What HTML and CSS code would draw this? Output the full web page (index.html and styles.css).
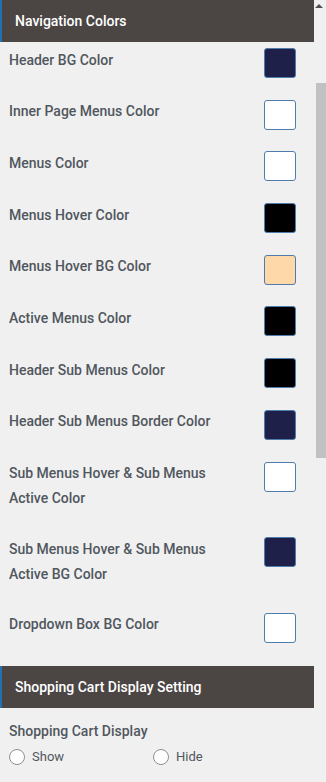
FILE: index.html
```html
<!DOCTYPE html>
<html lang="en">
<head>
  <meta charset="UTF-8">
  <title>Navigation Colors</title>
  <link rel="stylesheet" href="styles.css">
</head>
<body>

  <div class="layout">
    <div class="panel">
      <h3 class="section-title">Navigation Colors</h3>

      <div class="row">
        <span class="label">Header BG Color</span>
        <span class="swatch navy"></span>
      </div>
      <div class="row">
        <span class="label">Inner Page Menus Color</span>
        <span class="swatch white"></span>
      </div>
      <div class="row">
        <span class="label">Menus Color</span>
        <span class="swatch white"></span>
      </div>
      <div class="row">
        <span class="label">Menus Hover Color</span>
        <span class="swatch black"></span>
      </div>
      <div class="row">
        <span class="label">Menus Hover BG Color</span>
        <span class="swatch peach"></span>
      </div>
      <div class="row">
        <span class="label">Active Menus Color</span>
        <span class="swatch black"></span>
      </div>
      <div class="row">
        <span class="label">Header Sub Menus Color</span>
        <span class="swatch black"></span>
      </div>
      <div class="row">
        <span class="label">Header Sub Menus Border Color</span>
        <span class="swatch navy"></span>
      </div>
      <div class="row">
        <span class="label">Sub Menus Hover &amp; Sub Menus Active Color</span>
        <span class="swatch white"></span>
      </div>
      <div class="row">
        <span class="label">Sub Menus Hover &amp; Sub Menus Active BG Color</span>
        <span class="swatch navy"></span>
      </div>
      <div class="row">
        <span class="label">Dropdown Box BG Color</span>
        <span class="swatch white"></span>
      </div>

      <h3 class="section-title second">Shopping Cart Display Setting</h3>

      <div class="field">
        <div class="field-label">Shopping Cart Display</div>
        <div class="options">
          <label class="option"><span class="radio"></span>Show</label>
          <label class="option"><span class="radio"></span>Hide</label>
        </div>
      </div>
    </div>

    <!-- fake scrollbar -->
    <div class="scrollbar">
      <span class="arrow"></span>
      <span class="thumb"></span>
    </div>
  </div>

</body>
</html>
```

FILE: styles.css
```css
body {
  margin: 0;
  background: #f0f0f0;
  font-family: Roboto, "Liberation Sans", sans-serif;
}
.layout {
  display: flex;
}
.panel {
  width: 314px;
}
.section-title {
  margin: 0;
  height: 42px;
  line-height: 42px;
  padding-left: 13px;
  background: #4b4644;
  border-left: 2px solid #2271b1;
  color: #fff;
  font-size: 14px;
  font-weight: 500;
}
.section-title.second {
  margin-top: 7.3px;
}
.row {
  display: flex;
  justify-content: space-between;
  align-items: flex-start;
  padding: 6px 18px 15.7px 9px;
}
.label {
  width: 215px;
  margin-top: -0.5px;
  padding-bottom: 4.5px;
  line-height: 25px;
  font-size: 14px;
  font-weight: 500;
  color: #50575e;
}
.swatch {
  box-sizing: border-box;
  width: 32px;
  height: 30px;
  border: 1px solid #4f7dab;
  border-radius: 3px;
}
.navy { background: #1f2049; }
.white { background: #fff; }
.black { background: #000; }
.peach { background: #fed8a8; }

.field {
  padding: 13px 9px 0;
}
.field-label {
  line-height: 20px;
  font-size: 14px;
  font-weight: 500;
  color: #50575e;
}
.options {
  display: flex;
  margin-top: 6px;
}
.option {
  display: flex;
  align-items: center;
  width: 144px;
  line-height: 20px;
  font-size: 13px;
  color: #50575e;
}
.radio {
  box-sizing: border-box;
  width: 16px;
  height: 16px;
  margin-right: 7px;
  border: 1px solid #8c8f94;
  border-radius: 50%;
  background: #fff;
}

.scrollbar {
  width: 12px;
  display: flex;
  flex-direction: column;
  align-items: flex-end;
}
.arrow {
  margin: 4px 3px 0 0;
  border-left: 4px solid transparent;
  border-right: 4px solid transparent;
  border-bottom: 4px solid #505050;
}
.thumb {
  width: 10px;
  height: 375px;
  margin-top: 75px;
  background: #c1c1c1;
}
```
